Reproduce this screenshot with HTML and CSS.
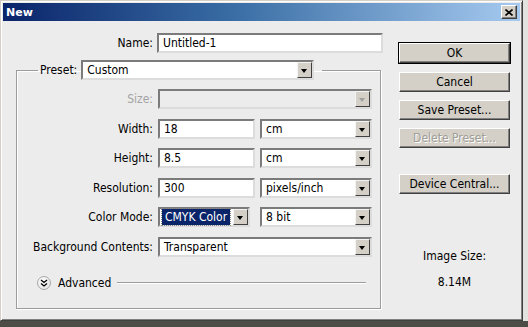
FILE: index.html
```html
<!DOCTYPE html>
<html lang="en">
<head>
  <meta charset="UTF-8" />
  <title>New</title>
  <link rel="stylesheet" href="styles.css">
</head>
<body>
  <div class="window">
    <div class="titlebar">
      <span class="title">New</span>
      <span class="close">
        <svg width="8" height="7" viewBox="0 0 8 7"><path d="M0.5 0.5 L7.5 6.5 M7.5 0.5 L0.5 6.5" stroke="#000" stroke-width="1.6" fill="none"/></svg>
      </span>
    </div>

    <div class="content">
      <div class="left">
        <div class="name-row">
          <span class="label">Name:</span>
          <div class="field">Untitled-1</div>
        </div>

        <fieldset class="preset">
          <legend>
            <span class="label">Preset:</span>
            <div class="field select preset-select">Custom<span class="arrow"></span></div>
          </legend>

          <!-- document settings -->
          <div class="grid">
            <span class="label disabled">Size:</span>
            <div class="field select span2 is-disabled"><span class="arrow"></span></div>

            <span class="label">Width:</span>
            <div class="field">18</div>
            <div class="field select">cm<span class="arrow"></span></div>

            <span class="label">Height:</span>
            <div class="field">8.5</div>
            <div class="field select">cm<span class="arrow"></span></div>

            <span class="label">Resolution:</span>
            <div class="field">300</div>
            <div class="field select">pixels/inch<span class="arrow"></span></div>

            <span class="label">Color Mode:</span>
            <div class="field select mode"><span class="picked">CMYK Color</span><span class="arrow"></span></div>
            <div class="field select">8 bit<span class="arrow"></span></div>

            <span class="label">Background Contents:</span>
            <div class="field select span2">Transparent<span class="arrow"></span></div>
          </div>

          <div class="advanced">
            <span class="toggle">
              <svg width="8" height="8" viewBox="0 0 8 8"><path d="M1 1 L4 3.5 L7 1 M1 4.5 L4 7 L7 4.5" stroke="#000" stroke-width="1.3" fill="none"/></svg>
            </span>
            <span>Advanced</span>
            <span class="rule"></span>
          </div>
        </fieldset>
      </div>

      <div class="right">
        <div class="btn default">OK</div>
        <div class="btn">Cancel</div>
        <div class="btn">Save Preset...</div>
        <div class="btn disabled">Delete Preset...</div>
        <div class="btn device">Device Central...</div>

        <div class="image-size">
          <div>Image Size:</div>
          <div class="size-value">8.14M</div>
        </div>
      </div>
    </div>
  </div>
</body>
</html>
```

FILE: styles.css
```css
html { height: 100%; background: linear-gradient(to bottom, #e2e2df 321px, #4e4c46 321px); }
body { margin: 0; font-family: "DejaVu Sans Condensed", "Liberation Sans", sans-serif; font-size: 12px; color: #000; }

.window {
  width: 523px; height: 321px; box-sizing: border-box; padding: 2px;
  background: #ececec;
  border: 1px solid; border-color: #d4d0c8 #404040 #404040 #d4d0c8;
  box-shadow: inset 1px 1px #fff, inset -1px -1px #808080;
  display: flex; flex-direction: column;
}

.titlebar {
  height: 18px; display: flex; align-items: center; justify-content: space-between;
  padding: 0 3px 0 3px;
  background: linear-gradient(to right, #0a246a, #3a6ea5 45%, #a6caf0);
}
.title { color: #fff; font-weight: bold; font-size: 11px; font-family: "DejaVu Sans", sans-serif; }
.close {
  width: 16px; height: 14px; box-sizing: border-box; display: flex; align-items: center; justify-content: center;
  background: #d4d0c8; border: 1px solid; border-color: #fff #404040 #404040 #fff;
  box-shadow: inset -1px -1px #808080;
}

.content { display: flex; gap: 16px; padding: 12px 0 0 13px; }
.left { width: 367px; }

.label { text-align: right; white-space: nowrap; }
.label.disabled { color: #a3a3a3; }

.field {
  height: 20px; box-sizing: border-box; position: relative;
  display: flex; align-items: center; padding-left: 4px;
  background: #fff; white-space: nowrap;
  border: 2px solid; border-color: #7b7b7b #dcdcdc #dcdcdc #7b7b7b;
}
.select { padding-right: 18px; }
.select.is-disabled { background: #ececec; }
.arrow {
  position: absolute; right: 0; top: 0; width: 15px; height: 16px; box-sizing: border-box;
  background: #d4d0c8; border: 1px solid; border-color: #f4f4f4 #404040 #404040 #f4f4f4;
}
.arrow::after {
  content: ""; position: absolute; left: 3px; top: 6px;
  border-left: 3.5px solid transparent; border-right: 3.5px solid transparent; border-top: 4px solid #000;
}
.is-disabled .arrow::after { border-top-color: #a0a0a0; }

.name-row { display: grid; grid-template-columns: 137px 226px; column-gap: 4px; align-items: center; }

.preset {
  margin: 7px 2px 0 0; padding: 0 0 18px 0; min-width: 0;
  border: 1px solid #9c9c9c; box-shadow: 1px 1px #fff, inset 1px 1px #fff;
}
.preset legend { margin-left: 21px; padding: 0 8px 0 2px; display: flex; align-items: center; gap: 4px; }
.preset-select { width: 233px; }

.grid {
  margin-top: 9px;
  display: grid; grid-template-columns: 136px 97px 112px; grid-auto-rows: 20px;
  column-gap: 5px; row-gap: 9.5px; align-items: center;
}
.span2 { grid-column: span 2; }
.mode { width: 92px; padding-left: 2px; }
.picked { background: #0a246a; color: #fff; padding: 1px 3px; outline: 1px dotted #888; }

.advanced { display: flex; align-items: center; margin-top: 19px; padding-left: 20px; }
.toggle {
  width: 14px; height: 14px; box-sizing: border-box; border-radius: 50%; margin-right: 7px;
  display: flex; align-items: center; justify-content: center;
  background: radial-gradient(circle at 40% 35%, #fff, #dcdcdc); border: 1px solid #a8a8a8;
}
.rule { flex: 1; height: 1px; background: #9c9c9c; margin: 0 14px 0 6px; box-shadow: 0 1px #fff; }

.right { width: 111px; padding-top: 10px; display: flex; flex-direction: column; }
.btn {
  height: 20px; box-sizing: border-box; margin-bottom: 8px;
  display: flex; align-items: center; justify-content: center;
  background: #d4d0c8; border: 1px solid; border-color: #fff #404040 #404040 #fff;
  box-shadow: inset -1px -1px #808080;
}
.btn.default { outline: 1px solid #000; margin-bottom: 9px; }
.btn.disabled { color: #a09d96; text-shadow: 1px 1px #fff; }
.btn.device { margin-top: 18px; }

.image-size { margin-top: 47px; text-align: center; }
.size-value { margin-top: 12px; }
```
